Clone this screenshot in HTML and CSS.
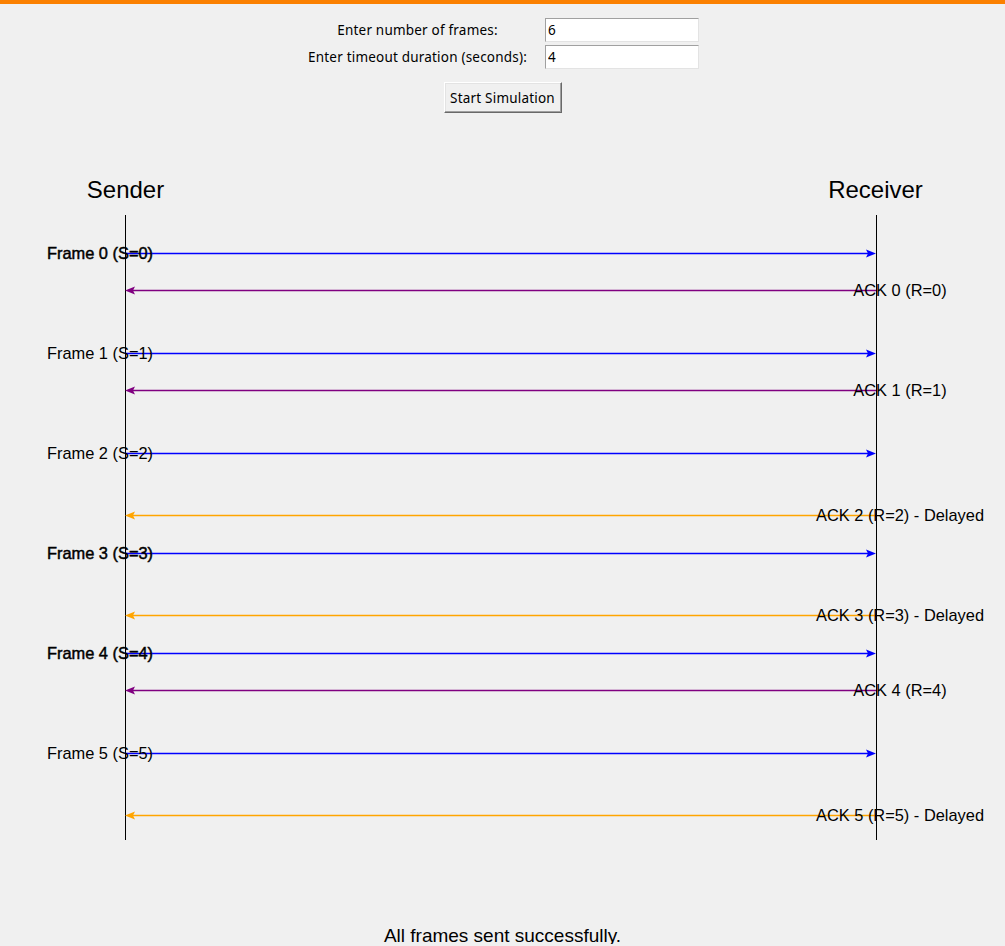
FILE: index.html
```html
<!DOCTYPE html>
<html lang="en">
<head>
<meta charset="utf-8">
<title>Stop and Wait Simulation</title>
<link rel="stylesheet" href="styles.css">
</head>
<body>
<header class="controls">
  <div class="form-grid">
    <label class="field-label" for="frames">Enter number of frames:</label>
    <input class="field-input" id="frames" type="text" value="6">
    <label class="field-label" for="timeout">Enter timeout duration (seconds):</label>
    <input class="field-input" id="timeout" type="text" value="4">
  </div>
  <button class="start-btn" type="button">Start Simulation</button>
</header>

<svg class="diagram" width="1005" height="798" viewBox="0 130 1005 798" xmlns="http://www.w3.org/2000/svg">
  <text class="heading" x="125.5" y="198">Sender</text>
  <text class="heading" x="875.5" y="198">Receiver</text>

  <line class="lifeline" x1="125.5" y1="215" x2="125.5" y2="840"/>
  <line class="lifeline" x1="876.5" y1="215" x2="876.5" y2="840"/>

  <!-- Frame 0 -->
  <line class="frame-line" x1="125" y1="253.5" x2="868" y2="253.5"/>
  <polygon class="frame-head" points="876,253.5 866,249.5 868,253.5 866,257.5"/>
  <line class="ack-line" x1="876" y1="290.5" x2="133" y2="290.5"/>
  <polygon class="ack-head" points="125,290.5 135,286.5 133,290.5 135,294.5"/>

  <!-- Frame 1 -->
  <line class="frame-line" x1="125" y1="353.5" x2="868" y2="353.5"/>
  <polygon class="frame-head" points="876,353.5 866,349.5 868,353.5 866,357.5"/>
  <line class="ack-line" x1="876" y1="390.5" x2="133" y2="390.5"/>
  <polygon class="ack-head" points="125,390.5 135,386.5 133,390.5 135,394.5"/>

  <!-- Frame 2 -->
  <line class="frame-line" x1="125" y1="453.5" x2="868" y2="453.5"/>
  <polygon class="frame-head" points="876,453.5 866,449.5 868,453.5 866,457.5"/>
  <line class="delay-line" x1="876" y1="515.5" x2="133" y2="515.5"/>
  <polygon class="delay-head" points="125,515.5 135,511.5 133,515.5 135,519.5"/>

  <!-- Frame 3 -->
  <line class="frame-line" x1="125" y1="553.5" x2="868" y2="553.5"/>
  <polygon class="frame-head" points="876,553.5 866,549.5 868,553.5 866,557.5"/>
  <line class="delay-line" x1="876" y1="615.5" x2="133" y2="615.5"/>
  <polygon class="delay-head" points="125,615.5 135,611.5 133,615.5 135,619.5"/>

  <!-- Frame 4 -->
  <line class="frame-line" x1="125" y1="653.5" x2="868" y2="653.5"/>
  <polygon class="frame-head" points="876,653.5 866,649.5 868,653.5 866,657.5"/>
  <line class="ack-line" x1="876" y1="690.5" x2="133" y2="690.5"/>
  <polygon class="ack-head" points="125,690.5 135,686.5 133,690.5 135,694.5"/>

  <!-- Frame 5 -->
  <line class="frame-line" x1="125" y1="753.5" x2="868" y2="753.5"/>
  <polygon class="frame-head" points="876,753.5 866,749.5 868,753.5 866,757.5"/>
  <line class="delay-line" x1="876" y1="815.5" x2="133" y2="815.5"/>
  <polygon class="delay-head" points="125,815.5 135,811.5 133,815.5 135,819.5"/>

  <!-- labels -->
  <text class="label retx" x="100" y="259">Frame 0 (S=0)</text>
  <text class="label" x="900" y="296">ACK 0 (R=0)</text>
  <text class="label" x="100" y="359">Frame 1 (S=1)</text>
  <text class="label" x="900" y="396">ACK 1 (R=1)</text>
  <text class="label" x="100" y="459">Frame 2 (S=2)</text>
  <text class="label" x="900" y="521">ACK 2 (R=2) - Delayed</text>
  <text class="label retx" x="100" y="559">Frame 3 (S=3)</text>
  <text class="label" x="900" y="621">ACK 3 (R=3) - Delayed</text>
  <text class="label retx" x="100" y="659">Frame 4 (S=4)</text>
  <text class="label" x="900" y="696">ACK 4 (R=4)</text>
  <text class="label" x="100" y="759">Frame 5 (S=5)</text>
  <text class="label" x="900" y="821">ACK 5 (R=5) - Delayed</text>
</svg>

<p class="status">All frames sent successfully.</p>
</body>
</html>
```

FILE: styles.css
```css
html {
  overflow: hidden;
}

body {
  margin: 0;
  background: #f0f0f0;
  border-top: 4px solid #fb8000;
  font-family: "Noto Sans", "Liberation Sans", sans-serif;
  color: #000;
}

.controls {
  height: 126px;
  box-sizing: border-box;
  padding-top: 14px;
  display: flex;
  flex-direction: column;
  align-items: center;
}

.form-grid {
  display: grid;
  grid-template-columns: 239px 170px;
  row-gap: 3px;
  align-items: center;
}

.field-label {
  text-align: center;
  font-size: 13.5px;
  letter-spacing: 0.2px;
  line-height: 17px;
  white-space: nowrap;
}

.field-input {
  margin: 0 8px;
  width: 154px;
  height: 24px;
  box-sizing: border-box;
  padding: 0 2px;
  background: #fff;
  border: 1px solid;
  border-color: #a0a0a0 #e3e3e3 #e3e3e3 #a0a0a0;
  font-family: "Noto Sans", "Liberation Sans", sans-serif;
  font-size: 13.5px;
  color: #000;
  outline: none;
}

.start-btn {
  margin-top: 13px;
  width: 118px;
  height: 31px;
  box-sizing: border-box;
  padding: 0;
  background: #f0f0f0;
  border: 1px solid;
  border-color: #ffffff #696969 #696969 #ffffff;
  box-shadow: inset -1px -1px 0 #a0a0a0, inset 1px 1px 0 #e3e3e3;
  font-family: "Noto Sans", "Liberation Sans", sans-serif;
  font-size: 13.5px;
  letter-spacing: 0.2px;
  color: #000;
}

.diagram {
  display: block;
}

.heading {
  font-family: "Liberation Sans", Arial, sans-serif;
  font-size: 24px;
  text-anchor: middle;
  fill: #000;
}

.label {
  font-family: "Liberation Sans", Arial, sans-serif;
  font-size: 16.4px;
  text-anchor: middle;
  fill: #000;
}

.retx {
  stroke: #000;
  stroke-width: 0.45px;
}

.lifeline {
  stroke: #000;
  stroke-width: 1px;
  shape-rendering: crispEdges;
}

.frame-line,
.ack-line,
.delay-line {
  stroke-width: 1.4px;
}

.frame-line {
  stroke: #0000ff;
}

.frame-head {
  fill: #0000ff;
}

.ack-line {
  stroke: #800080;
}

.ack-head {
  fill: #800080;
}

.delay-line {
  stroke: #ffa500;
}

.delay-head {
  fill: #ffa500;
}

.status {
  margin: 0;
  height: 16px;
  line-height: 16px;
  text-align: center;
  font-family: "Liberation Sans", Arial, sans-serif;
  font-size: 19px;
}
```
